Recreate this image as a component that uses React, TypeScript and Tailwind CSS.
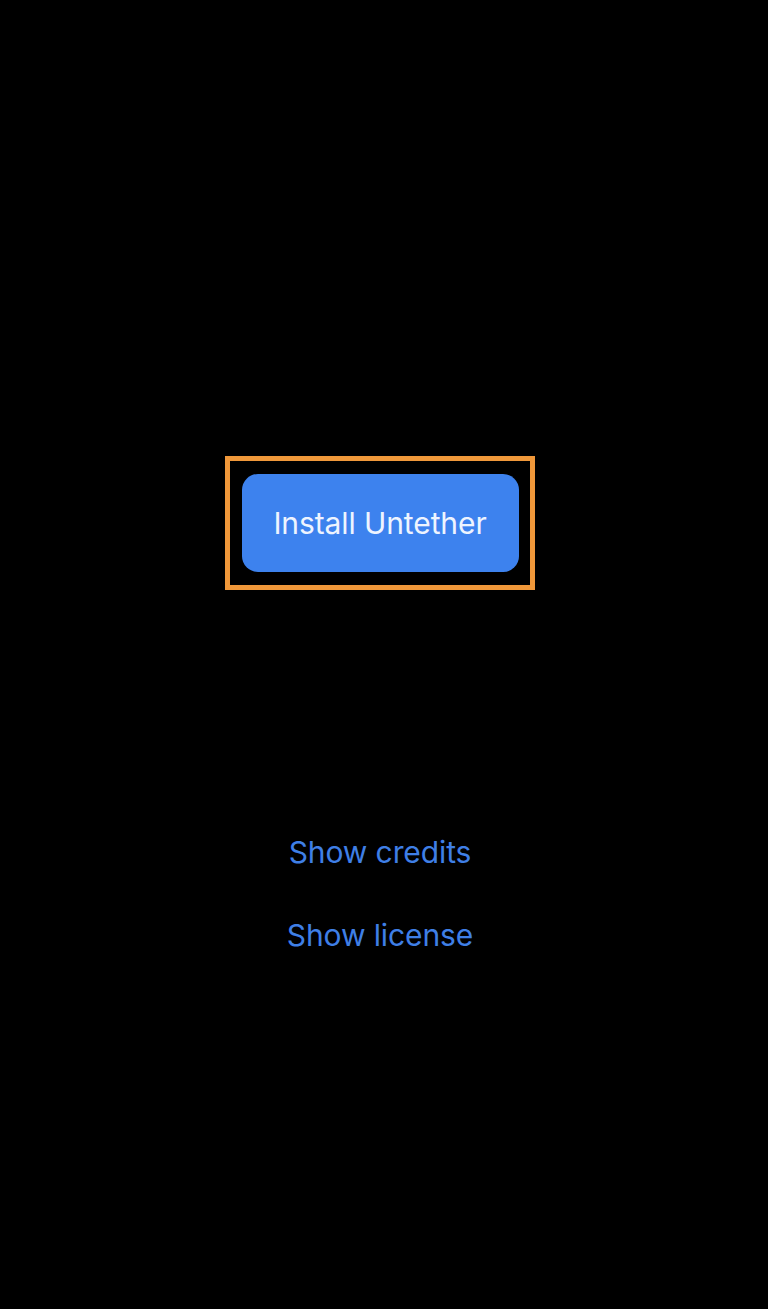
export default function App() {
  return (
    <div className="w-[768px] h-[1309px] bg-black flex flex-col items-center pr-[8px]" style={{ fontFamily: 'Inter, "Noto Sans", sans-serif' }}>
      <div className="mt-[456px] w-[310px] h-[134px] border-[5px] border-[#f0983a] flex items-center justify-center">
        <div className="w-[277px] h-[98px] rounded-[16px] bg-[#3d82ee] flex items-center justify-center text-[30px] text-[#eef4ff] tracking-[-0.1px]">
          Install Untether
        </div>
      </div>
      <div className="mt-[243px] text-[30px] text-[#3f7fe6] leading-[38px] tracking-[-0.1px]">Show credits</div>
      <div className="mt-[45px] text-[30px] text-[#3f7fe6] leading-[38px] tracking-[-0.1px]">Show license</div>
    </div>
  );
}
